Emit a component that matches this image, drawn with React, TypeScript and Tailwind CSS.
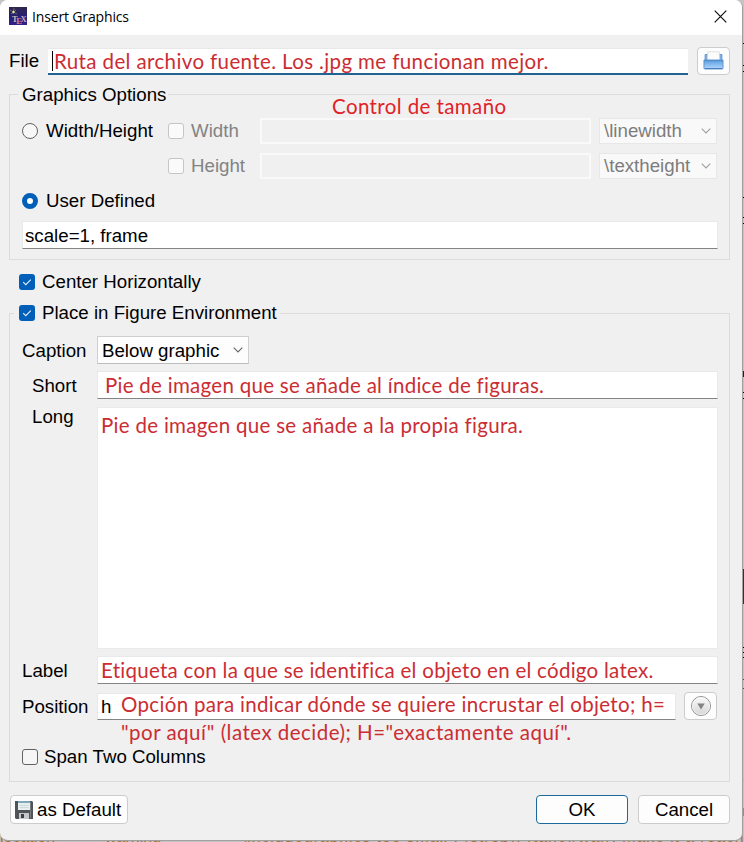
import type { ReactNode } from 'react';

const sans = "font-['Liberation_Sans',Arial,sans-serif]";
const noteBase =
  "block w-max whitespace-pre font-[Lato,sans-serif] [font-variant-ligatures:none] text-[20.5px] leading-[28px]";

function Note({ children, className = '', color = 'text-[#cb2d33]' }: { children: ReactNode; className?: string; color?: string }) {
  return <span className={`${noteBase} ${color} ${className}`}>{children}</span>;
}

function Field({ children, className = '' }: { children?: ReactNode; className?: string }) {
  return (
    <div className={`flex items-center border-x border-t border-b border-x-[#e9e9e9] border-t-[#e9e9e9] border-b-[#848484] bg-white ${className}`}>
      {children}
    </div>
  );
}

function Check({ on = false, disabled = false }: { on?: boolean; disabled?: boolean }) {
  if (on) {
    return (
      <span className="flex size-4 shrink-0 items-center justify-center rounded-[3px] bg-[#005fb8]">
        <svg width="16" height="16" viewBox="0 0 16 16" fill="none" stroke="#e8f1fa" strokeWidth="1.1">
          <path d="M4.2 8.2 6.8 10.7 11.8 5.7" />
        </svg>
      </span>
    );
  }
  return (
    <span className={`size-4 shrink-0 rounded-[3px] border ${disabled ? 'border-[#c5c5c5] bg-[#fafafa]' : 'border-[#626262] bg-[#f5f5f5]'}`} />
  );
}

function Chevron({ color }: { color: string }) {
  return (
    <svg width="10" height="6" viewBox="0 0 10 6" fill="none" stroke={color} strokeWidth="1.1">
      <path d="M.7.7 5 5 9.3.7" />
    </svg>
  );
}

function UnitSelect({ children }: { children: string }) {
  return (
    <div className="ml-2 flex h-[26px] w-[118px] items-center justify-between border border-[#e7e7e7] bg-[#f9f9f9] pr-[5px] pl-1 text-[#7d7d7d]">
      <span>{children}</span>
      <Chevron color="#a0a0a0" />
    </div>
  );
}

function TexLogo() {
  return (
    <svg width="18" height="18" viewBox="0 0 18 18">
      <defs>
        <linearGradient id="night" x1="0" y1="0" x2="0" y2="1">
          <stop offset="0" stopColor="#30264e" />
          <stop offset=".6" stopColor="#241d79" />
          <stop offset="1" stopColor="#35218c" />
        </linearGradient>
      </defs>
      <rect width="18" height="18" fill="url(#night)" />
      <path d="M1 3 8 7M5 1l-1 6M2 7l5-4" stroke="#777d54" strokeWidth=".8" />
      <circle cx="4.5" cy="5" r="1.2" fill="#e1e5a6" />
      <text x="3.1" y="14.5" fontFamily="Liberation Serif" fontSize="8.5" fontWeight="700" fill="#ccb2b9">T</text>
      <text x="7.3" y="16.8" fontFamily="Liberation Serif" fontSize="8.5" fontWeight="700" fill="#d0857e">E</text>
      <text x="11.5" y="14.5" fontFamily="Liberation Serif" fontSize="8.5" fontWeight="700" fill="#cba4c6">X</text>
    </svg>
  );
}

function TrayIcon() {
  return (
    <svg className="mr-px" width="21" height="20" viewBox="0 0 22 20" preserveAspectRatio="none">
      <defs>
        <linearGradient id="tray" x1="0" y1="0" x2="0" y2="1">
          <stop offset="0" stopColor="#4c8bd0" />
          <stop offset=".25" stopColor="#72abe8" />
          <stop offset="1" stopColor="#b3d9ff" />
        </linearGradient>
      </defs>
      <path d="M2.2 3.5h3.6v7H2.2zM16.200 3.5h3.6v7h-3.6z" fill="#7eaee2" stroke="#5e91cc" strokeWidth=".9" />
      <path d="M5 .8h12l.5 8.700h-13z" fill="#fcfcfc" stroke="#d4d4d4" strokeWidth=".7" />
      <path d="M1 9h20v8q0 1-1 1H2q-1 0-1-1z" fill="url(#tray)" stroke="#588fcd" strokeWidth=".9" />
      <path d="M2 17.500h18" stroke="#477dbc" />
    </svg>
  );
}

function FloppyIcon() {
  return (
    <svg width="18" height="18" viewBox="0 0 18 18">
      <path d="M0 0h17l1 1v17H1l-1-1z" fill="#505456" />
      <path d="M3 0h12v9H3z" fill="#e7eeef" />
      <path d="M3 0h12v2H3z" fill="#7fa9b8" />
      <path d="M4.5 4.5h9M4.5 6.5h9" stroke="#cad3d5" strokeWidth=".8" />
      <path d="M4 12h10v6H4z" fill="#c5c7c8" />
      <path d="M6 13h3v4H6z" fill="#3d4042" />
      <path d="M15.5 1v16" stroke="#777b7d" />
    </svg>
  );
}

function DropIcon() {
  return (
    <svg width="22" height="22" viewBox="0 0 22 22">
      <defs>
        <linearGradient id="disc" x1="0" y1="0" x2="0" y2="1">
          <stop offset="0" stopColor="#fafafa" />
          <stop offset=".5" stopColor="#e8e8e8" />
          <stop offset="1" stopColor="#d5d5d5" />
        </linearGradient>
      </defs>
      <circle cx="11" cy="11" r="9.5" fill="url(#disc)" stroke="#929292" />
      <circle cx="11" cy="11" r="8.5" fill="none" stroke="#f8f8f8" strokeWidth=".8" />
      <path d="M7.3 8.5h7.4L11 14.5z" fill="#848484" />
    </svg>
  );
}

const edge = [
  { gap: 'mt-[43px]', bar: 'h-px bg-black' },
  { gap: 'mt-[21px]', bar: 'h-px bg-black' },
  { gap: 'mt-[5px]', bar: 'h-px bg-black' },
  { gap: 'mt-[125px]', bar: 'h-px bg-black' },
  { gap: 'mt-[19px]', bar: 'h-px bg-black' },
  { gap: 'mt-[5px]', bar: 'h-px bg-black' },
  { gap: 'mt-[147px]', bar: 'h-[6px] bg-[#15232d]' },
  { gap: 'mt-[15px]', bar: 'h-px bg-black' },
  { gap: 'mt-[5px]', bar: 'h-px bg-black' },
  { gap: 'mt-[170px]', bar: 'h-[35px] bg-[#333333]' },
  { gap: 'mt-[43px]', bar: 'h-px bg-black' },
  { gap: 'mt-[4px]', bar: 'h-px bg-black' },
  { gap: 'mt-[4px]', bar: 'h-px bg-black' },
  { gap: 'mt-[21px]', bar: 'h-px bg-[#9d2828]' },
  { gap: 'mt-[8px]', bar: 'h-px bg-[#9d2828]' },
  { gap: 'mt-[88px]', bar: 'h-[5px] bg-[#e0bd75]' },
  { gap: 'mt-[26px]', bar: 'h-[8px] bg-[#c28440]' },
];

export default function App() {
  return (
    <div className={`relative h-[842px] w-[744px] overflow-hidden bg-[#c4c4c4] text-[18.7px] leading-[22px] text-black ${sans}`}>
      <div className="absolute top-0 right-0 flex w-[2px] flex-col">
        {edge.map((e, i) => (
          <span key={i} className={`shrink-0 ${e.gap} ${e.bar}`} />
        ))}
      </div>
      <div className="absolute top-[828px] left-0 w-full overflow-hidden text-[16px] leading-[18px] whitespace-pre text-[#a8713a]">
        <span className="inline-block w-[105px]">location</span>
        <span className="inline-block w-[137px]">warning</span>
        <span className="tracking-[0.85px]">\includegraphics too small , (strop), (tanc)/war/, make it a reach</span>
      </div>

      <main className="relative h-[841px] w-[743px] overflow-hidden rounded-[8px] border-r border-b border-[#a0a0a0] bg-[#f0f0f0]">
        <header className="flex h-[35px] items-center bg-white pr-[15px] pl-[9px]">
          <div className="mt-[-3px]"><TexLogo /></div>
          <h1 className="mt-[-2px] ml-[5px] flex-1 font-['Open_Sans',sans-serif] text-[14px] tracking-[-0.15px]">Insert Graphics</h1>
          <svg className="mt-[-3px]" width="13" height="13" viewBox="0 0 13 13" stroke="#111111" strokeWidth="1.2">
            <path d="m.7.7 11.6 11.6M12.3.7.7 12.3" />
          </svg>
        </header>

        <div className="flex h-[51px] pt-[12px] pl-[9px]">
          <label className="mt-[3px] w-[39px]">File</label>
          <div className="mt-[1px] flex h-[27px] w-[640px] items-center border-t border-b-2 border-t-[#e8e8e8] border-b-[#216493] bg-white pl-1">
            <span className="h-5 w-px bg-black" />
            <Note className="ml-px tracking-[0.38px]">Ruta del archivo fuente. Los .jpg me funcionan mejor.</Note>
          </div>
          <button className="ml-[9px] flex h-[28px] w-[33px] items-center justify-center rounded-[4px] border border-[#cccccc] bg-[#fdfdfd]"><TrayIcon /></button>
        </div>

        <section className="mx-[9px] mt-[8px] h-[166px] w-[721px] border border-[#dcdcdc]">
          <h2 className="-mt-[11px] ml-[8px] h-[22px] w-[150px] bg-[#f0f0f0] pl-1">Graphics Options</h2>
          <div className="relative mt-[12px] flex h-[26px] items-center pl-[12px]">
            <Note color="text-[#e02227]" className="absolute top-[-26px] left-[322px] tracking-[0.4px]">Control de tamaño</Note>
            <span className="size-4 rounded-full border border-[#626262] bg-[#f7f7f7]" />
            <span className="ml-[8px] w-[122px]">Width/Height</span>
            <Check disabled />
            <span className="ml-[7px] w-[69px] text-[#838383]">Width</span>
            <div className="h-[26px] w-[331px] border-2 border-[#f9f9f9]" />
            <UnitSelect>\linewidth</UnitSelect>
          </div>
          <div className="mt-[9px] flex h-[26px] items-center pl-[158px]">
            <Check disabled />
            <span className="ml-[7px] w-[69px] text-[#838383]">Height</span>
            <div className="h-[26px] w-[331px] border-2 border-[#f9f9f9]" />
            <UnitSelect>\textheight</UnitSelect>
          </div>
          <div className="mt-[11px] flex h-[22px] items-center pl-[12px]">
            <span className="size-4 rounded-full border-[5px] border-[#005fb8] bg-white" />
            <span className="ml-[8px]">User Defined</span>
          </div>
          <Field className="mt-[9px] ml-[12px] h-[28px] w-[696px] pt-[2px] pl-[2px]">scale=1, frame</Field>
        </section>

        <div className="mt-[11px] flex h-[22px] items-center pl-[19px]">
          <Check on />
          <span className="ml-[7px]">Center Horizontally</span>
        </div>

        <section className="mx-[9px] mt-[20px] h-[469px] w-[721px] border border-[#dcdcdc]">
          <div className="-mt-[12px] ml-[4px] flex h-[22px] w-[266px] items-center bg-[#f0f0f0] pl-[5px]">
            <Check on />
            <h2 className="ml-[7px] whitespace-nowrap">Place in Figure Environment</h2>
          </div>
          <div className="mt-[12px] flex h-[28px] items-center pl-[12px]">
            <span className="mt-[2px] w-[75px]">Caption</span>
            <div className="flex h-[28px] w-[152px] items-center justify-between border border-[#cfcfcf] border-b-[#bdbdbd] bg-[#fdfdfd] pr-[5px] pl-1">
              <span className="mt-px">Below graphic</span>
              <Chevron color="#656565" />
            </div>
          </div>
          <div className="mt-[7px] flex h-[28px] items-center pl-[22px]">
            <span className="mt-[2px] w-[65px]">Short</span>
            <Field className="h-[28px] w-[621px] pl-[7px]">
              <Note className="tracking-[0.28px]">Pie de imagen que se añade al índice de figuras.</Note>
            </Field>
          </div>
          <div className="mt-[8px] flex h-[241px] pl-[22px]">
            <span className="mt-[-1px] w-[65px]">Long</span>
            <div className="h-[242px] w-[621px] border border-[#eaeaea] bg-white pt-[3px] pl-[3px]">
              <Note className="tracking-[0.3px]">Pie de imagen que se añade a la propia figura.</Note>
            </div>
          </div>
          <div className="mt-[8px] flex h-[28px] items-center pl-[12px]">
            <span className="mt-[2px] w-[75px]">Label</span>
            <Field className="h-[28px] w-[621px] pl-[3px]">
              <Note className="tracking-[0.27px]">Etiqueta con la que se identifica el objeto en el código latex.</Note>
            </Field>
          </div>
          <div className="relative mt-[8px] flex h-[28px] items-center pl-[12px]">
            <span className="mt-[2px] w-[75px]">Position</span>
            <Field className="h-[27px] w-[579px] pt-px pl-[3px]">h</Field>
            <button className="ml-[8px] flex h-[28px] w-[33px] items-center justify-center rounded-[4px] border border-[#cccccc] bg-[#fdfdfd]"><DropIcon /></button>
            <div className="absolute top-[-2px] left-[111px]">
              <Note className="tracking-[0.32px]">Opción para indicar dónde se quiere incrustar el objeto; h=</Note>
              <Note className="tracking-[0.48px]">"por aquí" (latex decide); H="exactamente aquí".</Note>
            </div>
          </div>
          <div className="mt-[26px] flex h-[22px] items-center pl-[12px]">
            <Check />
            <span className="ml-[6px]">Span Two Columns</span>
          </div>
        </section>

        <footer className="mt-[13px] flex h-[29px] pl-[10px]">
          <button className="flex w-[118px] items-center rounded-[4px] border border-[#cccccc] bg-[#fdfdfd] pl-1">
            <FloppyIcon />
            <span className="ml-1 whitespace-nowrap">as Default</span>
          </button>
          <button className="ml-[408px] w-[92px] rounded-[4px] border border-[#1c6a9b] bg-[#fdfdfd]">OK</button>
          <button className="ml-[10px] w-[92px] rounded-[4px] border border-[#cccccc] bg-[#fdfdfd]">Cancel</button>
        </footer>
      </main>
    </div>
  );
}
